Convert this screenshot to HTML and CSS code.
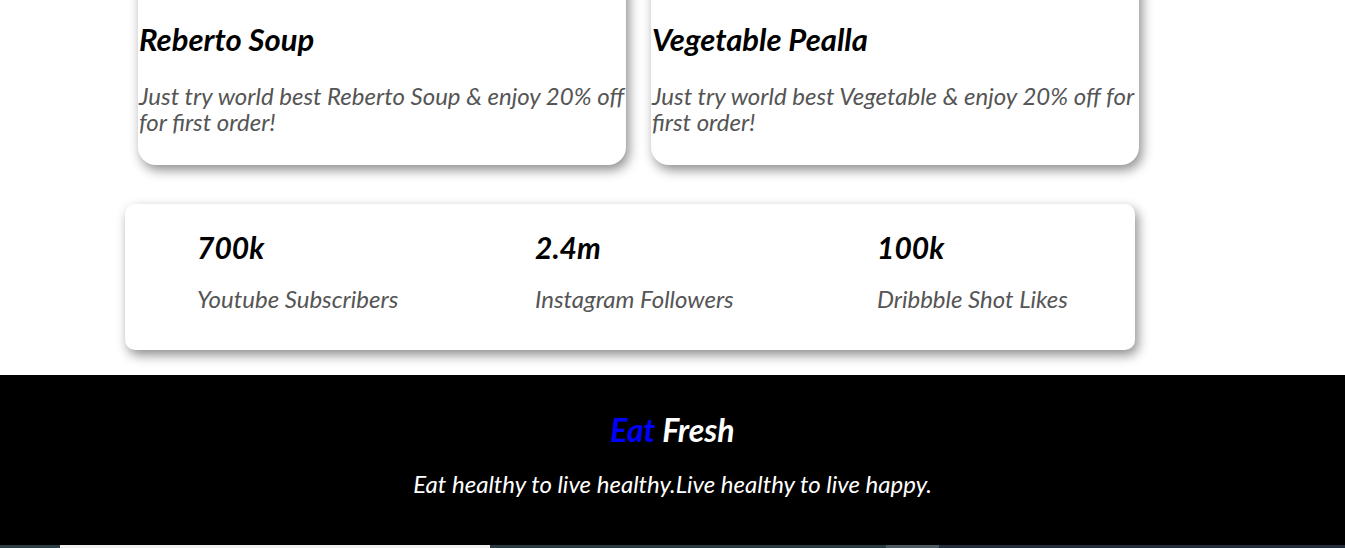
FILE: index.html
```html
<!DOCTYPE html>
<html lang="en">
<head>
<meta charset="utf-8">
<title>Eat Fresh</title>
<link rel="stylesheet" href="styles.css">
</head>
<body>
<section class="offers">
  <div class="offer-grid">
    <article class="card">
      <h2 class="card-title">Reberto Soup</h2>
      <p class="card-text">Just try world best Reberto Soup &amp; enjoy 20% off for first order!</p>
    </article>
    <article class="card">
      <h2 class="card-title">Vegetable Pealla</h2>
      <p class="card-text">Just try world best Vegetable &amp; enjoy 20% off for first order!</p>
    </article>
  </div>
</section>
<section class="stats-wrap">
  <div class="stats">
    <div class="stat">
      <h3 class="stat-num">700k</h3>
      <p class="stat-label">Youtube Subscribers</p>
    </div>
    <div class="stat">
      <h3 class="stat-num">2.4m</h3>
      <p class="stat-label">Instagram Followers</p>
    </div>
    <div class="stat">
      <h3 class="stat-num">100k</h3>
      <p class="stat-label">Dribbble Shot Likes</p>
    </div>
  </div>
</section>
<footer class="footer">
  <h1 class="brand"><span class="brand-eat">Eat</span> Fresh</h1>
  <p class="tagline">Eat healthy to live healthy.Live healthy to live happy.</p>
</footer>
<div class="strip">
  <span class="s s1"></span>
  <span class="s s2"></span>
  <span class="s s3"></span>
  <span class="s s4"></span>
  <span class="s s5"></span>
</div>
</body>
</html>
```

FILE: styles.css
```css
* { box-sizing: border-box; }
html, body { margin: 0; padding: 0; }
body {
  font-family: "Lato", "Open Sans", sans-serif;
  font-style: italic;
  background: #fff;
  overflow: hidden;
}
.offers {
  padding-left: 138px;
  margin-top: -60px;
}
.offer-grid {
  display: grid;
  grid-template-columns: 488px 488px;
  column-gap: 25px;
}
.card {
  background: #fff;
  border-radius: 18px;
  box-shadow: 3px 5px 12px rgba(0,0,0,0.45);
  padding: 81px 0 0 1px;
  height: 225px;
}
.card-title {
  margin: 0;
  font-size: 31px;
  font-weight: 700;
  line-height: 36px;
  color: #000;
}
.card-text {
  margin: 26px 0 0;
  font-size: 24px;
  line-height: 26px;
  color: #555;
}
.stats-wrap {
  padding: 39px 0 25px 125px;
}
.stats {
  width: 1010px;
  height: 146px;
  background: #fff;
  border-radius: 10px;
  box-shadow: 3px 5px 12px rgba(0,0,0,0.45);
  display: grid;
  grid-template-columns: 338px 342px auto;
  padding: 25px 0 0 72px;
}
.stat-num {
  margin: 0;
  font-size: 30px;
  font-weight: 700;
  line-height: 36px;
  color: #000;
}
.stat-label {
  margin: 21px 0 0;
  font-size: 24px;
  line-height: 26px;
  color: #555;
}
.footer {
  background: #000;
  height: 170px;
  text-align: center;
  padding-top: 36px;
}
.brand {
  margin: 0;
  font-size: 32px;
  font-weight: 700;
  line-height: 38px;
  color: #fff;
}
.brand-eat { color: #0000ff; }
.tagline {
  margin: 22px 0 0;
  font-size: 24px;
  line-height: 26px;
  color: #fff;
}
.strip {
  display: flex;
  height: 3px;
}
.s { display: block; height: 3px; }
.s1 { width: 60px; background: #2b3e46; }
.s2 { width: 430px; background: #efefef; }
.s3 { width: 396px; background: #283a42; }
.s4 { width: 53px; background: #4c5a62; }
.s5 { flex: 1; background: #222d3d; }
```
